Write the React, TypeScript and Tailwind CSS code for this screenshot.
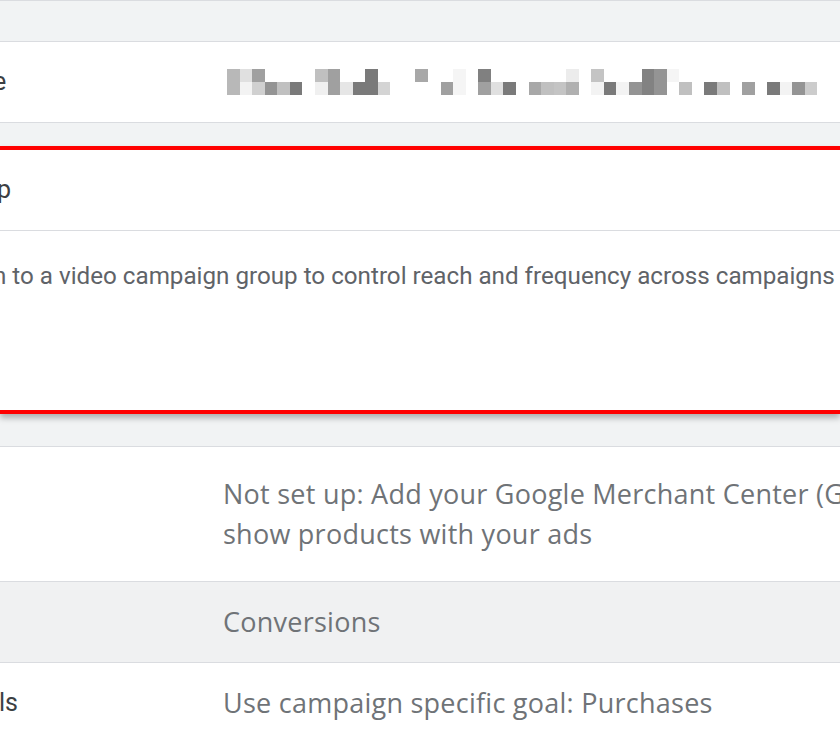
import React from "react";

const PIX: [string, string][] = [
  ["#b8b8b8", "#b8b8b8"],
  ["#e0e0e0", "#f3f3f3"],
  ["#a0a0a0", "#d0d0d0"],
  ["#ffffff", "#949494"],
  ["#ffffff", "#c0c0c0"],
  ["#ffffff", "#7a7a7a"],
  ["#ffffff", "#ffffff"],
  ["#c0c0c0", "#f0f0f0"],
  ["#a0a0a0", "#a0a0a0"],
  ["#ffffff", "#e6e6e6"],
  ["#ffffff", "#7a7a7a"],
  ["#7a7a7a", "#7a7a7a"],
  ["#ffffff", "#d4d4d4"],
  ["#ffffff", "#ffffff"],
  ["#ffffff", "#ffffff"],
  ["#a8a8a8", "#ffffff"],
  ["#ffffff", "#ffffff"],
  ["#ffffff", "#a0a0a0"],
  ["#f5f5f5", "#f5f5f5"],
  ["#ffffff", "#ffffff"],
  ["#808080", "#a0a0a0"],
  ["#ffffff", "#e0e0e0"],
  ["#ffffff", "#7a7a7a"],
  ["#ffffff", "#ffffff"],
  ["#ffffff", "#a8a8a8"],
  ["#ffffff", "#c0c0c0"],
  ["#ffffff", "#c4c4c4"],
  ["#ececec", "#b0b0b0"],
  ["#ffffff", "#ffffff"],
  ["#c4c4c4", "#f3f3f3"],
  ["#ffffff", "#7a7a7a"],
  ["#ffffff", "#f3f3f3"],
  ["#ffffff", "#949494"],
  ["#828282", "#828282"],
  ["#949494", "#949494"],
  ["#f5f5f5", "#ffffff"],
  ["#ffffff", "#c0c0c0"],
  ["#ffffff", "#ffffff"],
  ["#ffffff", "#7a7a7a"],
  ["#ffffff", "#c0c0c0"],
  ["#ffffff", "#ffffff"],
  ["#ffffff", "#a0a0a0"],
  ["#ffffff", "#ffffff"],
  ["#ffffff", "#7a7a7a"],
  ["#ffffff", "#f3f3f3"],
  ["#ffffff", "#949494"],
  ["#ffffff", "#cccccc"],
];

function Pixelated() {
  return (
    <div className="flex">
      {PIX.map((c, i) => (
        <div key={i} className="flex flex-col w-[12.57px]">
          <div className="h-[12.6px]" style={{ backgroundColor: c[0] }} />
          <div className="h-[12.6px]" style={{ backgroundColor: c[1] }} />
        </div>
      ))}
    </div>
  );
}

export default function App() {
  return (
    <div className="w-[840px] h-[740px] overflow-hidden bg-[#f1f3f4] [font-family:Roboto,sans-serif]">
      <div className="h-[42px] border-t border-b border-[#dadce0] bg-[#f1f3f4]" />
      <div className="h-[81px] bg-white border-b border-[#dadce0] flex items-center">
        <div className="w-[227px] shrink-0 overflow-hidden whitespace-nowrap">
          <span className="inline-block text-[25px] text-[#3c4043] ml-[-7px]">e</span>
        </div>
        <Pixelated />
      </div>
      <div className="h-[23px]" />
      <div className="bg-white border-y-4 border-[#ff0000] shadow-[0_4px_6px_rgba(0,0,0,0.28)]">
        <div className="h-[81px] flex items-center border-b border-[#dadce0] overflow-hidden whitespace-nowrap">
          <span className="inline-block text-[25px] text-[#3c4043] ml-[-3px]">p</span>
        </div>
        <div className="h-[179px] pt-[30px] overflow-hidden whitespace-nowrap">
          <span className="inline-block text-[24.2px] leading-[30px] text-[#5f6368] ml-[-7px]">
            n to a video campaign group to control reach and frequency across campaigns
          </span>
        </div>
      </div>
      <div className="h-[32px]" />
      <div className="bg-white border-t border-[#dadce0] [font-family:'Open_Sans',sans-serif] tracking-[0.25px]">
        <div className="h-[135px] flex border-b border-[#dadce0]">
          <div className="w-[223px] shrink-0" />
          <div className="pt-[27px] text-[27px] leading-[40px] text-[#6f7377] whitespace-nowrap overflow-hidden">
            Not set up: Add your Google Merchant Center (GMC) account to
            <br />
            show products with your ads
          </div>
        </div>
        <div className="h-[81px] flex items-center bg-[#f0f1f2] border-b border-[#dadce0]">
          <div className="w-[223px] shrink-0" />
          <div className="text-[27px] text-[#6f7377]">Conversions</div>
        </div>
        <div className="h-[80px] flex items-center">
          <div className="w-[223px] shrink-0 overflow-hidden whitespace-nowrap">
            <span className="inline-block text-[25px] text-[#3c4043] tracking-normal [font-family:Roboto,sans-serif] ml-[-1px]">ls</span>
          </div>
          <div className="text-[27px] text-[#6f7377] whitespace-nowrap">Use campaign specific goal: Purchases</div>
        </div>
      </div>
    </div>
  );
}
